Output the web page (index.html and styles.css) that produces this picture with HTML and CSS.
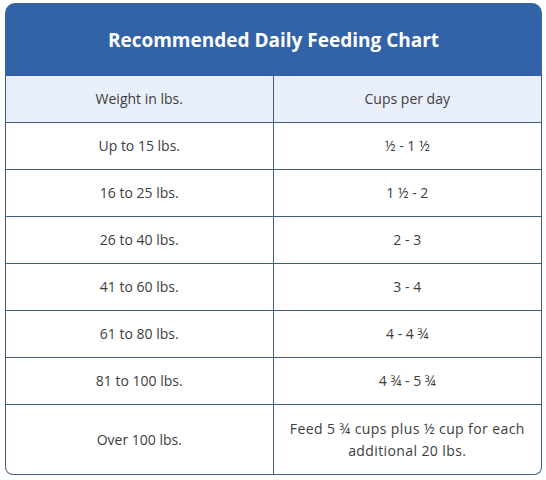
FILE: index.html
```html
<!DOCTYPE html>
<html lang="en">
<head>
    <meta charset="UTF-8">
    <meta name="viewport" content="width=device-width, initial-scale=1.0">
    <title>Recommended Daily Feeding Chart</title>
    <link rel="stylesheet" href="styles.css">
</head>
<body>
    <div class="chart">
        <div class="chart-title">Recommended Daily Feeding Chart</div>
        <table class="feeding-table">
            <thead>
                <tr>
                    <th>Weight in lbs.</th>
                    <th>Cups per day</th>
                </tr>
            </thead>
            <tbody>
                <tr><td>Up to 15 lbs.</td><td>½ - 1 ½</td></tr>
                <tr><td>16 to 25 lbs.</td><td>1 ½ - 2</td></tr>
                <tr><td>26 to 40 lbs.</td><td>2 - 3</td></tr>
                <tr><td>41 to 60 lbs.</td><td>3 - 4</td></tr>
                <tr><td>61 to 80 lbs.</td><td>4 - 4 ¾</td></tr>
                <tr><td>81 to 100 lbs.</td><td>4 ¾ - 5 ¾</td></tr>
                <tr class="last-row">
                    <td>Over 100 lbs.</td>
                    <td class="long-text">Feed 5 ¾ cups plus ½ cup for each<br>additional 20 lbs.</td>
                </tr>
            </tbody>
        </table>
    </div>
</body>
</html>
```

FILE: styles.css
```css
* {
    box-sizing: border-box;
    margin: 0;
    padding: 0;
}

body {
    font-family: "Open Sans", "Liberation Sans", sans-serif;
    color: #3d3d3d;
    background-color: #ffffff;
    padding: 3px 4px 0 5px;
}

.chart {
    width: 537px;
}

.chart-title {
    height: 73px;
    background-color: #3262a8;
    color: #ffffff;
    font-size: 19px;
    font-weight: 700;
    display: flex;
    align-items: center;
    justify-content: center;
    border-radius: 10px 10px 0 0;
}

.feeding-table {
    width: 100%;
    border-spacing: 0;
    border: 1px solid #415d7c;
    border-top: none;
    border-radius: 0 0 8px 8px;
    table-layout: fixed;
}

.feeding-table th,
.feeding-table td {
    height: 47px;
    text-align: center;
    vertical-align: middle;
    font-size: 14px;
    font-weight: 400;
    border-bottom: 1px solid #415d7c;
    line-height: 22px;
}

.feeding-table th:first-child,
.feeding-table td:first-child {
    border-right: 1px solid #415d7c;
}

.feeding-table th {
    background-color: #e8effa;
}

.last-row td {
    height: 69px;
    border-bottom: none;
}

.long-text {
    letter-spacing: 0.4px;
}
```
